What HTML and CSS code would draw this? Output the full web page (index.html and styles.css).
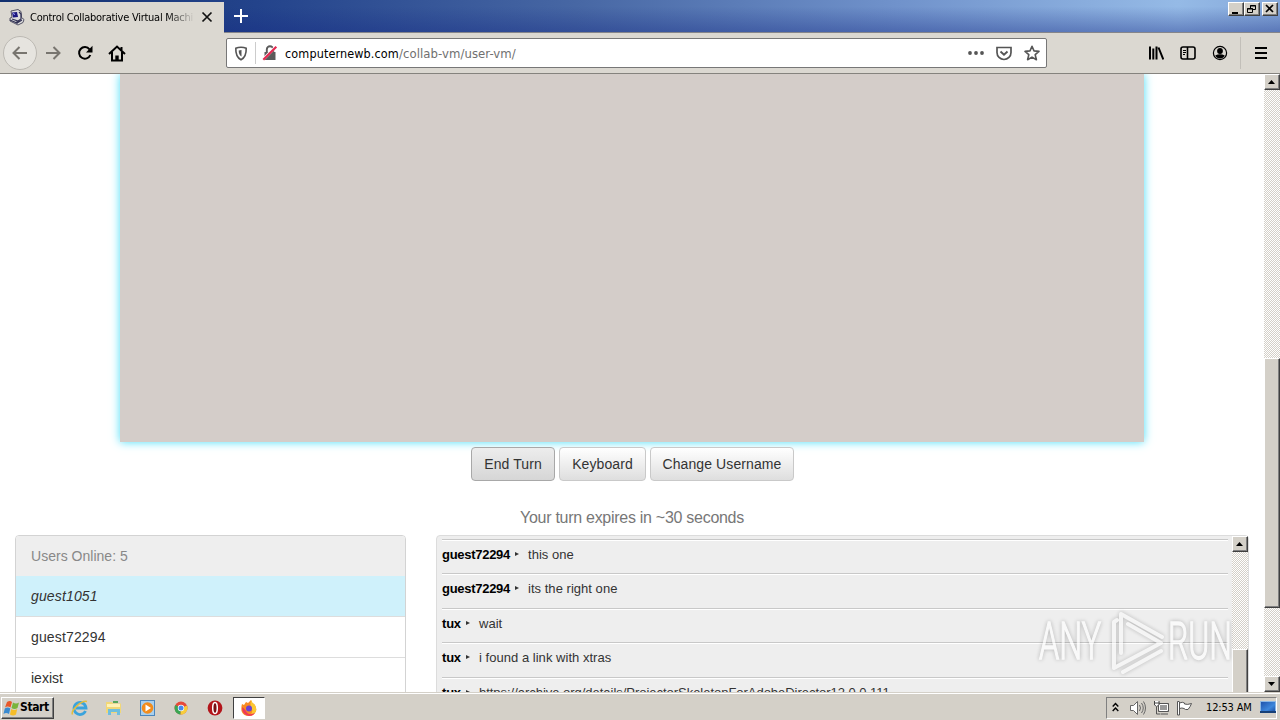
FILE: index.html
```html
<!DOCTYPE html>
<html lang="en">
<head>
<meta charset="utf-8">
<title>Control Collaborative Virtual Machines</title>
<link rel="stylesheet" href="styles.css">
</head>
<body>
<div class="desktop">
  <header class="titlebar">
    <div class="tab">
      <svg class="favicon" width="17" height="17" viewBox="0 0 17 17"><path d="M3 2l7-1.500 3 2 .5 6 2.500 2-1 3-5 2.500-8-4V9l2-.5z" fill="#ddd" stroke="#556" stroke-width="1"/><path d="M4 3.500l5-.5 1 5-5 .5z" fill="#1b1780"/><path d="M11 3l2 2v5l-3 2-6-2M2 11l7 3 5-3M9 12v3" fill="none" stroke="#335" stroke-width="1.200"/><path d="M5 4.500l2 1" stroke="#aaf"/></svg>
      <span class="tab-title">Control Collaborative Virtual Machi</span>
      <svg class="tab-close" width="12" height="12" viewBox="0 0 12 12"><path d="M1.500 1.500l9 9M10.500 1.500l-9 9" stroke="#111" stroke-width="1.700"/></svg>
    </div>
    <svg class="newtab" width="14" height="14" viewBox="0 0 14 14"><path d="M7 0v14M0 7h14" stroke="#fff" stroke-width="2"/></svg>
    <div class="winbtns">
      <svg class="bevel" width="16" height="14" viewBox="1 1 14 12"><path d="M4 11h6" stroke="#000" stroke-width="2"/></svg>
      <svg class="bevel" width="16" height="14" viewBox="1 1 14 12"><path d="M6.500 6V3.500h5v4H9M6 4h6M3.500 6.500h5v4h-5zM3 7h6" fill="none" stroke="#000"/></svg>
      <svg class="bevel gap" width="16" height="14" viewBox="1 1 14 12"><path d="M4 3l7 7M11 3l-7 7" stroke="#000" stroke-width="1.700"/></svg>
    </div>
  </header>

  <nav class="toolbar">
    <div class="nav-left">
      <span class="back"><svg width="16" height="16" viewBox="0 0 16 16"><path d="M15 8H1.500M7.500 2L1.500 8l6 6" class="ln gray"/></svg></span>
      <svg width="16" height="16" viewBox="0 0 16 16"><path d="M1 8h13.500M8.500 2l6 6-6 6" class="ln gray"/></svg>
      <svg width="16" height="16" viewBox="0 0 16 16"><path d="M13.300 10A5.800 5.800 0 1 1 12.500 4.300" class="ln"/><path d="M15.500.8v6.700H9z"/></svg>
      <svg width="18" height="17" viewBox="0 0 18 17"><path d="M1 9l8-7.500L17 9M4 7v8.500h10V7M13.500 2v3" class="ln"/><path d="M7.300 15.500v-5h3.400v5z"/></svg>
    </div>
    <div class="urlbar">
      <svg class="shield" width="14" height="15" viewBox="0 0 14 15"><path d="M7 1.200c2 0 3.800.4 5.200 1.100C12.400 8 11 11.800 7 13.800 3 11.800 1.600 8 1.800 2.300 3.200 1.600 5 1.200 7 1.200z" fill="none" stroke="#555" stroke-width="1.600"/><path d="M7.500 4v6.500C5.500 9.500 4.600 7 4.700 4.500z" fill="#555"/></svg>
      <span class="url-sep"></span>
      <svg class="lock" width="16" height="16" viewBox="0 0 16 16"><path d="M2.500 7h11v8h-11z" fill="#5b5b5b"/><path d="M4.800 7V4.500a3.200 3.200 0 0 1 6.400 0V7" fill="none" stroke="#5b5b5b" stroke-width="1.900"/><path d="M1.500 14L13.500 2" stroke="#fff" stroke-width="3"/><path d="M1.300 14.700L14.300 1.700" stroke="#e22850" stroke-width="2.200"/></svg>
      <span class="url"><span class="host">computernewb.com</span><span class="path">/collab-vm/user-vm/</span></span>
      <svg class="dots" width="16" height="4" viewBox="0 0 16 4" fill="#555"><circle cx="2" cy="2" r="1.900"/><circle cx="8" cy="2" r="1.900"/><circle cx="14" cy="2" r="1.900"/></svg>
      <svg class="pocket" width="16" height="15" viewBox="0 0 16 15" fill="none" stroke="#555" stroke-width="1.700"><path d="M1 1.500h14v5a7 7 0 0 1-14 0z"/><path d="M4.500 5.500L8 8.800l3.500-3.300" stroke-width="1.900"/></svg>
      <svg class="star" width="16" height="16" viewBox="0 0 16 16"><path d="M8 1.300l2 4.600 5 .5-3.800 3.300 1.200 5L8 12.100l-4.400 2.600 1.200-5L1 6.400l5-.5z" fill="none" stroke="#555" stroke-width="1.600" stroke-linejoin="round"/></svg>
    </div>
    <div class="nav-right">
      <svg width="16" height="16" viewBox="0 0 16 16"><path d="M2 1.500v13M5.300 3.500v11M8.500 1.500v13M10.500 2.500l4.800 12" fill="none" stroke="#000" stroke-width="2"/></svg>
      <svg width="16" height="16" viewBox="0 0 16 16"><rect x="1" y="2" width="14" height="12" rx="2" class="ln2"/><path d="M7.500 2v12" class="ln2"/><path d="M3 5.500h3M3 7.500h3M3 9.500h2" stroke="#000"/></svg>
      <svg width="16" height="16" viewBox="0 0 16 16"><circle cx="8" cy="8" r="6.600" fill="none" stroke="#000" stroke-width="1.200"/><circle cx="8" cy="6" r="2.900"/><path d="M3.200 10.500q4.800-2.500 9.600 0a5.400 5.400 0 0 1-9.600 0z"/></svg>
      <span class="menu-sep"></span>
      <svg width="12" height="14" viewBox="0 0 12 14"><path d="M0 2h12M0 7h12M0 12h12" stroke="#000" stroke-width="2"/></svg>
    </div>
  </nav>

  <div class="viewport">
    <main class="page">
      <div class="vm-screen"></div>
      <div class="actions">
        <button class="btn active"><span>End Turn</span></button>
        <button class="btn"><span>Keyboard</span></button>
        <button class="btn"><span>Change Username</span></button>
      </div>
      <p class="status">Your turn expires in ~30 seconds</p>
      <div class="columns">
        <section class="users">
          <div class="row head">Users Online: 5</div>
          <div class="row me">guest1051</div>
          <div class="row">guest72294</div>
          <div class="row">iexist</div>
        </section>
        <section class="chat">
          <div class="messages">
            <div class="msg"><b class="long">guest72294</b><i></i><span>this one</span></div>
            <div class="msg"><b class="long">guest72294</b><i></i><span>its the right one</span></div>
            <div class="msg"><b>tux</b><i></i><span>wait</span></div>
            <div class="msg"><b>tux</b><i></i><span>i found a link with xtras</span></div>
            <div class="msg"><b>tux</b><i></i><span class="link">https://archive.org/details/ProjectorSkeletonForAdobeDirector12.0.0.111</span></div>
          </div>
          <div class="scroll">
            <svg class="bevel" width="16" height="16" viewBox="1 1 14 14"><path d="M4 10h7L7.500 6z"/></svg>
            <div class="chat-thumb bevel"></div>
          </div>
        </section>
      </div>
    </main>
    <div class="scroll">
      <svg class="bevel" width="16" height="16" viewBox="1 1 14 14"><path d="M4 10h7L7.500 6z"/></svg>
      <div class="page-thumb bevel"></div>
      <svg class="bevel bottom" width="16" height="16" viewBox="1 1 14 14"><path d="M4 6h7l-3.500 4z"/></svg>
    </div>
    <svg class="watermark" width="206" height="76" viewBox="0 0 206 76">
      <g fill="#fff" stroke="#fff" stroke-width="1.400">
        <text x="10" y="54" textLength="62" lengthAdjust="spacingAndGlyphs">ANY</text>
        <text x="139" y="54" textLength="64" lengthAdjust="spacingAndGlyphs">RUN</text>
      </g>
      <g fill="none" stroke="#fff" stroke-opacity=".9" stroke-width="4" stroke-linejoin="round" stroke-linecap="round">
        <path d="M92 48V9l41 23M99 19l33 19-47 25V17l3-2M94 67l38-21"/>
      </g>
    </svg>
  </div>

  <footer class="taskbar">
    <div class="start">
      <svg width="17" height="16" viewBox="0 0 17 16"><path d="M4 2q3-2 5 0L7.500 7.500q-3-2-5.500 0z" fill="#e8582a"/><path d="M10 2.500q3 2 6 0l-1.500 5.500q-3 2-6 0z" fill="#79b43c"/><path d="M1.800 8.500q3-2 5.500 0L6 14q-3-2-5.500 0z" fill="#3a8ad0"/><path d="M8.200 9q3 2 6 0L13 14.500q-3 2-6 0z" fill="#f6bd28"/></svg>
      <b>Start</b>
    </div>
    <div class="launch">
      <svg width="18" height="18" viewBox="0 0 18 18"><path d="M14.500 12A6 6 0 1 1 15 9H5" fill="none" stroke="#3aa3dc" stroke-width="2.800"/><path d="M1.500 15.500C-.5 12 10 1 16 2.500" fill="none" stroke="#e4bd3c" stroke-width="1.500"/></svg>
      <svg width="18" height="18" viewBox="0 0 18 18"><path d="M1 3h6l1 1.500h8V14H1z" fill="#f1d777"/><path d="M2 5h13v3H2z" fill="#fff2b5"/><path d="M3 16v-6h12v6h-3v-3H6v3z" fill="#6fbede"/><path d="M8 3h5" stroke="#58a65a" stroke-width="2"/></svg>
      <svg width="18" height="18" viewBox="0 0 18 18"><rect x="1.500" y="1.500" width="14" height="15" fill="#a9d0ee" stroke="#4b86bd"/><circle cx="8.500" cy="9" r="5.800" fill="#f28c1c"/><path d="M6.500 5.500v7l5.500-3.500z" fill="#fff"/></svg>
      <svg width="18" height="18" viewBox="0 0 18 18"><circle cx="9" cy="9" r="6.500" fill="#e64a3b"/><path d="M9 9L3.300 6A6.500 6.500 0 0 0 8.500 15.500z" fill="#3aa653"/><path d="M9 9l6-2.500A6.500 6.500 0 0 1 8.500 15.500z" fill="#f7cd3b"/><circle cx="9" cy="9" r="3.200" fill="#fff"/><circle cx="9" cy="9" r="2.500" fill="#4688ee"/></svg>
      <svg width="18" height="18" viewBox="0 0 18 18"><circle cx="9" cy="9" r="7.400" fill="#b3151b"/><ellipse cx="9" cy="9" rx="2.300" ry="5.500" fill="#771014" stroke="#fff" stroke-width="1.500"/></svg>
    </div>
    <div class="task"><svg width="18" height="18" viewBox="0 0 18 18"><path d="M2 5l2 1 2-3 2 1 3-3q1 3 3 4 3 3 2 7-2 5-7 5-6 0-7.500-5Q1 8 2 5z" fill="#fa8b21"/><path d="M11 1q1 3 3 4 3 3 2 7-2 4-6 5 4-5 1-9-1-3 0-7z" fill="#fdc832"/><path d="M2 8q0 8 7 9 4 0 6-3-7 3-9-2-2-3-4-4z" fill="#ee3a58"/><circle cx="9" cy="9.500" r="3" fill="#6a42d4"/></svg></div>
    <div class="tray">
      <svg class="chev" width="7" height="11" viewBox="0 0 7 11"><path d="M.7 4.500l2.800-3 2.800 3M.7 9l2.800-3 2.800 3" fill="none" stroke="#000" stroke-width="1.400"/></svg>
      <svg class="sound" width="17" height="16" viewBox="0 0 17 16" stroke="#666" fill="#fff"><path d="M1.500 5.500h3l4-4v13l-4-4h-3z"/><path d="M10.500 5q2 3 0 6M12.500 3q3.500 5 0 10M14.500 1.500q4 6.500 0 13" fill="none"/></svg>
      <svg class="net" width="17" height="16" viewBox="0 0 17 16"><path d="M5.500 3.500h10v8h-10z" fill="#999" stroke="#555"/><path d="M6.500 4.500h8v6h-8z" fill="none" stroke="#fff"/><path d="M8 14h7M3.500 7v7h4" stroke="#555" fill="none"/><path d="M1.500 1v4q2 3 4.500 0V1M1 3h5.500" stroke="#444" fill="#fff"/></svg>
      <svg class="flag" width="17" height="16" viewBox="0 0 17 16"><path d="M3.500 2v13h-2V1.500h2M3.500 3q3-1.500 5 0v1q3 1 7-.5-1 3-3.500 6-3 .5-4-1-2-1-4.500 0z" fill="#fff" stroke="#555"/></svg>
      <span class="clock">12:53 AM</span>
      <svg class="show" width="16" height="13" viewBox="0 0 16 13"><defs><linearGradient id="d" x2="1" y2="1"><stop stop-color="#1d4fa8"/><stop offset=".6" stop-color="#3e87dc"/><stop offset="1" stop-color="#17479c"/></linearGradient></defs><path d="M.5.500h15v11H.500z" fill="url(#d)" stroke="#8bb7e5"/><path d="M0 11h16" stroke="#174078" stroke-width="2"/></svg>
    </div>
  </footer>
</div>
</body>
</html>
```

FILE: styles.css
```css
* { box-sizing: border-box; }
body { margin: 0; overflow: hidden; }
svg { display: block; flex: none; }
.desktop { width: 1280px; height: 720px; display: flex; flex-direction: column; background: #d4d0c8; font-family: "Liberation Sans", Arial, sans-serif; }
.titlebar { height: 33px; flex: none; display: flex; align-items: flex-start; background: linear-gradient(180deg, transparent 32px, #85858a 32px), linear-gradient(180deg, transparent 20%, rgba(20,40,130,.4)), linear-gradient(90deg, #12306f, #23438b 20%, #4767a4 45%, #7092cb 70%, #95bae6 92%, #86a9da); }
.tab { width: 224px; height: 31px; margin-top: 2px; padding: 0 10px 0 8px; background: #dbd8d1; display: flex; align-items: center; }
.favicon { margin-right: 5px; }
.tab-title { width: 165px; padding-bottom: 1px; white-space: nowrap; font: 11px "DejaVu Sans Condensed", "DejaVu Sans", sans-serif; letter-spacing: -.26px; color: #000; -webkit-mask-image: linear-gradient(90deg, #000 83%, transparent); mask-image: linear-gradient(90deg, #000 83%, transparent); }
.tab-close { margin: 0 0 1px 6px; }
.newtab { margin: 9px 0 0 10px; }
.winbtns { margin: 2px 2px 0 auto; display: flex; }
.winbtns .gap { margin-left: 2px; }
.bevel { background: #d4d0c8; border: 1px solid; border-color: #fff #404040 #404040 #fff; box-shadow: inset -1px -1px #808080; }
.toolbar { height: 41px; flex: none; display: flex; align-items: center; background: #dbd8d1; border-bottom: 1px solid #85837e; }
.nav-left { width: 226px; display: flex; align-items: center; padding-left: 3px; gap: 16px; }
.nav-left svg:nth-child(2) { margin-left: -8px; }
.nav-left svg:last-child { margin-left: -1px; }
.back { width: 34px; height: 34px; border-radius: 50%; border: 1px solid #bcb9b3; background: #e6e4df; display: grid; place-items: center; }
.ln { fill: none; stroke: #000; stroke-width: 2; }
.ln.gray { stroke: #78756f; }
.ln2 { fill: none; stroke: #000; stroke-width: 1.6; }
.urlbar { width: 821px; height: 30px; border: 1px solid #777; border-radius: 2px; background: #fff; display: flex; align-items: center; padding: 0 6px 0 7px; }
.url-sep { width: 1px; height: 22px; background: #ccc; margin: 0 6px 0 7px; }
.url { margin-left: 7px; font: 13px "DejaVu Sans Condensed", "DejaVu Sans", sans-serif; white-space: nowrap; }
.host { letter-spacing: .12px; font-size: 12.5px; color: #000; }
.path { letter-spacing: .07px; color: #707070; }
.dots { margin-left: auto; }
.pocket { margin: 0 12px; }
.nav-right { margin-left: auto; display: flex; align-items: center; gap: 16px; padding-right: 13px; }
.menu-sep { width: 1px; height: 32px; background: #c2bfb9; margin: 0 -2px 0 -4px; }
.viewport { height: 618px; flex: none; display: flex; position: relative; overflow: hidden; background: #fff; }
.page { width: 1264px; height: 618px; overflow: hidden; }
.vm-screen { width: 1024px; height: 368px; margin-left: 120px; background: #d4cdc9; box-shadow: 0 0 9px #48def8; }
.actions { display: flex; gap: 4px; margin: 5px 0 0 471px; }
.btn { height: 34px; padding: 0; border: 1px solid #c9c9c9; border-radius: 4px; background: linear-gradient(#fff, #dedede); color: #333; font: 14px "Liberation Sans", Arial, sans-serif; width: 87px; text-align: center; letter-spacing: .1px; white-space: nowrap; }
.btn.active { width: 84px; background: linear-gradient(#ededed, #d6d6d6); border-color: #a8a8a8; }
.btn:last-child { width: 144px; }
.status { margin: 27px 0 0; text-align: center; font-size: 16px; line-height: 20px; letter-spacing: -.28px; color: #777; }
.columns { display: flex; margin: 7px 0 0 15px; gap: 30px; align-items: flex-start; }
.users { width: 391px; height: 200px; border: 1px solid #d3d3d3; border-radius: 4px; overflow: hidden; }
.row { height: 41px; border-bottom: 1px solid #ddd; padding-left: 15px; font-size: 14px; line-height: 40px; color: #333; letter-spacing: .15px; }
.row:last-child { letter-spacing: 0; }
.row.head { background: #eee; color: #888; height: 40px; border-bottom: 0; letter-spacing: .02px; }
.row.me { background: #cff1fb; font-style: italic; line-height: 41px; }
.chat { width: 813px; height: 200px; border: 1px solid #dcdcdc; border-radius: 4px; background: #eee; display: flex; }
.messages { width: 786px; margin: 3px 4px 0 5px; }
.msg { height: 34.4px; border-top: 1px solid #c8c8c8; box-shadow: inset 0 1px #fff; display: flex; align-items: flex-start; font-size: 13px; line-height: 29px; color: #333; white-space: nowrap; }
.msg b { color: #000; width: 20px; letter-spacing: -.2px; }
.msg b.long { width: 69px; letter-spacing: -.28px; }
.msg i { border: 2.5px solid transparent; border-left: 4px solid #333; border-right: 0; margin: 12px 9px 0 4px; }
.msg span { letter-spacing: .03px; }
.msg .link { letter-spacing: -.03px; }
.scroll { width: 16px; display: flex; flex-direction: column; background: repeating-conic-gradient(#d4d0c8 0 25%, #fff 0 50%) 0 0 / 2px 2px; }
.chat-thumb { height: 60px; margin-top: 97px; }
.page-thumb { height: 250px; margin-top: 268px; }
.bottom { margin-top: auto; }
.watermark { position: absolute; left: 1029px; top: 531px; filter: drop-shadow(0 0 2px rgba(0,0,0,.38)); opacity: .65; font: 300 51px Roboto, sans-serif; }
.taskbar { height: 28px; flex: none; display: flex; align-items: center; padding: 2px 3px 0 1px; border-top: 1px solid #d4d0c8; box-shadow: inset 0 1px #fff; }
.start { width: 53px; height: 22px; border: 1px solid; border-color: #fff #404040 #404040 #fff; box-shadow: inset -1px -1px #808080; display: flex; align-items: center; padding-left: 1px; font: 12px "DejaVu Sans Condensed", "DejaVu Sans", sans-serif; color: #000; }
.start b { letter-spacing: -.4px; padding-bottom: 1px; }
.launch { display: flex; gap: 15.8px; padding-left: 17px; }
.task { width: 32px; height: 22px; margin-left: 9px; border: 1px solid; border-color: #404040 #fff #fff #404040; background: #fff; display: grid; place-items: center; }
.tray { width: 171px; height: 22px; margin-left: auto; border: 1px solid; border-color: #808080 #fff #fff #808080; display: flex; align-items: center; padding-left: 5px; color: #000; }
.sound { margin-left: 10px; }
.net { margin-left: 7px; }
.flag { margin-left: 6px; }
.clock { width: 47px; margin-left: 13px; white-space: nowrap; font: 11px "DejaVu Sans Condensed", "DejaVu Sans", sans-serif; letter-spacing: -.15px; }
.show { margin-left: 7px; }
```
